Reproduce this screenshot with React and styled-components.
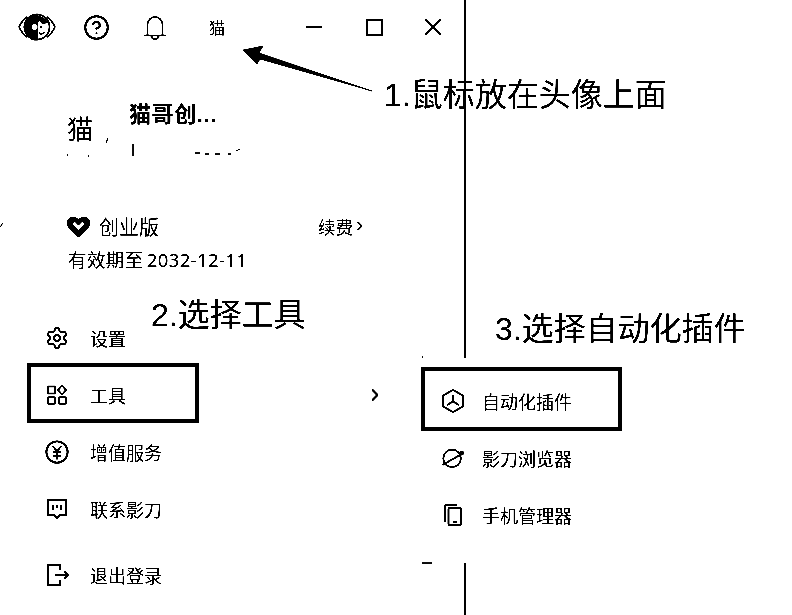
import React from 'react'
import styled, { createGlobalStyle } from 'styled-components'
import { ChevronRight, HelpCircle, Minus, X, Settings } from 'lucide-react'

const GlobalStyle = createGlobalStyle`
  html, body {
    margin: 0;
    padding: 0;
    background: #fff;
  }
  body {
    font-family: "Liberation Sans", "Noto Sans CJK SC", sans-serif;
    color: #000;
  }
`

const Page = styled.div`
  position: relative;
  width: 792px;
  height: 615px;
  overflow: hidden;
  background: #fff;
  filter: grayscale(1) brightness(0.85) contrast(6);
`

const Panel = styled.div`
  width: 466px;
  height: 615px;
  box-sizing: border-box;
  border-right: 2px solid #000;
  display: flex;
  flex-direction: column;
`

const TitleBar = styled.div`
  height: 54px;
  display: flex;
  align-items: center;
`

const TitleSlot = styled.div`
  width: ${(props) => props.$w}px;
  flex: none;
  display: flex;
  justify-content: center;
  align-items: center;
  font-size: ${(props) => props.$size || 16}px;
`

const MaxBox = styled.span`
  width: 17px;
  height: 17px;
  box-sizing: border-box;
  border: 2px solid #000;
`

const Profile = styled.div`
  height: 100px;
  display: flex;
  padding-left: 67px;
  gap: 36px;
`

const Avatar = styled.div`
  font-size: 26px;
  line-height: 30px;
  margin-top: 61px;
`

const Name = styled.div`
  font-size: 22px;
  line-height: 24px;
  font-weight: 700;
  letter-spacing: 0.6px;
  margin-top: 49px;
`

const Plan = styled.div`
  margin-top: 56px;
  padding-left: 67px;
  padding-right: 97px;
`

const PlanRow = styled.div`
  height: 32px;
  display: flex;
  align-items: center;
  font-size: 20px;
`

const PlanName = styled.span`
  margin-left: 9px;
  flex: 1;
`

const Renew = styled.span`
  display: flex;
  align-items: center;
  font-size: 17.5px;
`

const Expire = styled.div`
  font-family: "Noto Sans", "Noto Sans CJK SC", sans-serif;
  font-size: 18.5px;
  line-height: 28px;
  letter-spacing: 0.4px;
  word-spacing: -2px;
  margin-top: 4px;
  padding-left: 1px;
`

const Menu = styled.div`
  margin-top: 35px;
  display: flex;
  flex-direction: column;
`

const Row = styled.div`
  height: 57px;
  display: flex;
  align-items: center;
  font-size: 18px;
  padding-left: ${(props) => props.$indent}px;
  margin-top: ${(props) => props.$gap || 0}px;
`

const IconSlot = styled.span`
  width: 24px;
  margin-right: ${(props) => props.$space}px;
  flex: none;
  display: flex;
  justify-content: center;
  align-items: center;
`

const RowLabel = styled.span`
  flex: 1;
`

const RowArrow = styled.span`
  display: flex;
  margin-right: 79px;
`

const Submenu = styled.div`
  position: absolute;
  left: 420px;
  top: 358px;
  width: 204px;
  height: 205px;
  background: #fff;
  display: flex;
  flex-direction: column;
  padding-top: 14px;
  box-sizing: border-box;
`

const Mark = styled.div`
  position: absolute;
  box-sizing: border-box;
  border: 4px solid #000;
  left: ${(props) => props.$x}px;
  top: ${(props) => props.$y}px;
  width: ${(props) => props.$w}px;
  height: ${(props) => props.$h}px;
`

const Note = styled.div`
  position: absolute;
  left: ${(props) => props.$x}px;
  top: ${(props) => props.$y}px;
  font-size: 32px;
  line-height: 40px;
  white-space: nowrap;
`

const Overlay = styled.svg`
  position: absolute;
  left: 0;
  top: 0;
  pointer-events: none;
`

const Logo = () => (
  <svg width="38" height="28" viewBox="0 0 38 28" fill="none" stroke="#000" strokeWidth="1.6">
    <path d="M1 14C4 8 7 5 9 4M1 14c3 6 6 9 8 10M37 14c-3-6-6-9-8-10M37 14c-3 6-6 9-8 10" />
    <circle cx="19" cy="14" r="12.5" />
    <path d="M19 1.500a12.500 12.500 0 0 0 0 25z" fill="#000" />
    <circle cx="16.500" cy="14" r="3" fill="#fff" stroke="none" />
    <path d="M20 3c4 0 8 3 10 7l-6 1-2-3-2 1z" fill="#000" stroke="none" />
    <circle cx="23" cy="14" r="1.200" fill="#000" stroke="none" />
    <path d="M21 20c2 1.500 4 1 6-1" />
  </svg>
)

const BellIcon = () => (
  <svg width="24" height="25" viewBox="0 0 24 25" fill="none" stroke="#000" strokeWidth="1.500">
    <path d="M4.500 20V9.500a7.500 7.500 0 0 1 15 0V20" />
    <path d="M1 20.500h22" />
    <path d="M8.500 21a3.500 3 0 0 0 7 0" />
  </svg>
)

const HeartBadge = () => (
  <svg width="23" height="23" viewBox="0 0 24 24">
    <path
      fill="#000"
      fillRule="evenodd"
      d="M12 23.500L1.500 13C-1 9.500-.5 5 2.500 3c3-1.800 6.500-1.500 9.500 1.500C15 1.500 18.500 1.200 21.500 3c3 2 3.500 6.500 1 10zM5.500 9l6.500 7 6.500-7-2.400-2.200L12 11 7.900 6.800z"
    />
  </svg>
)

const ToolsIcon = () => (
  <svg width="22" height="22" viewBox="0 0 22 22" fill="none" stroke="#000" strokeWidth="1.700">
    <rect x="2" y="2.500" width="7" height="7" />
    <path d="M16 1.500l4 4.500-4 4.500-4-4.500z" />
    <rect x="2" y="13" width="7" height="7" rx="1.500" />
    <rect x="13" y="13" width="7" height="7" rx="1.500" />
  </svg>
)

const YuanIcon = () => (
  <svg width="26" height="26" viewBox="0 0 26 26" fill="none" stroke="#000" strokeWidth="2">
    <circle cx="13" cy="13" r="11.500" />
    <path d="M8.500 6.500L13 12.500l4.500-6M8.500 13h9M8.500 17h9M13 12.500V21" strokeWidth="1.800" />
  </svg>
)

const ChatIcon = () => (
  <svg width="22" height="22" viewBox="0 0 22 22" fill="none" stroke="#000" strokeWidth="2">
    <path d="M2 2h18v15h-6l-3 3-3-3H2z" />
    <path d="M7 7v5M11 7v3M15 7v5" />
  </svg>
)

const ExitIcon = () => (
  <svg width="24" height="24" viewBox="0 0 24 24" fill="none" stroke="#000" strokeWidth="2">
    <path d="M15 7V2H3v20h12v-5" />
    <path d="M10 12h13M19.500 8.500L23 12l-3.500 3.500" strokeWidth="1.500" />
  </svg>
)

const HexIcon = () => (
  <svg width="24" height="26" viewBox="0 0 24 26" fill="none" stroke="#000" strokeWidth="1.800">
    <path d="M12 2l10 5.500v11L12 24 2 18.500v-11z" />
    <path d="M12 7v6.500M12 13.500l-6 3.500M12 13.500l6 3.500" />
  </svg>
)

const PlanetIcon = () => (
  <svg width="26" height="24" viewBox="0 0 26 24" fill="none" stroke="#000" strokeWidth="1.800">
    <circle cx="12" cy="12.500" r="9.500" />
    <path d="M1.500 19.500L22 8" />
    <circle cx="22.500" cy="6.500" r="1.500" />
  </svg>
)

const PhoneIcon = () => (
  <svg width="20" height="22" viewBox="0 0 20 22" fill="none" stroke="#000" strokeWidth="1.800">
    <path d="M2 18V3c0-1 .5-2 2-2h10" />
    <rect x="5.500" y="4" width="12.500" height="17" rx="1" />
    <path d="M10 18h4" strokeWidth="2" />
  </svg>
)

const rows = [
  { icon: <Settings size={24} strokeWidth={1.8} />, label: '设置' },
  { icon: <ToolsIcon />, label: '工具', arrow: true },
  { icon: <YuanIcon />, label: '增值服务' },
  { icon: <ChatIcon />, label: '联系影刀' },
  { icon: <ExitIcon />, label: '退出登录', gap: 9 }
]

const subRows = [
  { icon: <HexIcon />, label: '自动化插件' },
  { icon: <PlanetIcon />, label: '影刀浏览器' },
  { icon: <PhoneIcon />, label: '手机管理器' }
]

export default function App() {
  return (
    <Page>
      <GlobalStyle />
      <Panel>
        <TitleBar>
          <TitleSlot $w={73}><Logo /></TitleSlot>
          <TitleSlot $w={46}><HelpCircle size={27} strokeWidth={1.8} /></TitleSlot>
          <TitleSlot $w={72}><BellIcon /></TitleSlot>
          <TitleSlot $w={52} $size={16}>猫</TitleSlot>
          <TitleSlot $w={41} />
          <TitleSlot $w={60}><Minus size={24} strokeWidth={2} /></TitleSlot>
          <TitleSlot $w={60}><MaxBox /></TitleSlot>
          <TitleSlot $w={58}><X size={28} strokeWidth={1.6} /></TitleSlot>
        </TitleBar>
        <Profile>
          <Avatar>猫</Avatar>
          <Name>猫哥创...</Name>
        </Profile>
        <Plan>
          <PlanRow>
            <HeartBadge />
            <PlanName>创业版</PlanName>
            <Renew>续费<ChevronRight size={14} strokeWidth={3} /></Renew>
          </PlanRow>
          <Expire>有效期至 2032-12-11</Expire>
        </Plan>
        <Menu>
          {rows.map((row) => (
            <Row key={row.label} $indent={45} $gap={row.gap}>
              <IconSlot $space={21}>{row.icon}</IconSlot>
              <RowLabel>{row.label}</RowLabel>
              {row.arrow && (
                <RowArrow><ChevronRight size={20} strokeWidth={2.4} /></RowArrow>
              )}
            </Row>
          ))}
        </Menu>
      </Panel>
      <Submenu>
        {subRows.map((row) => (
          <Row key={row.label} $indent={21}>
            <IconSlot $space={17}>{row.icon}</IconSlot>
            <RowLabel>{row.label}</RowLabel>
          </Row>
        ))}
      </Submenu>
      <Mark $x={27} $y={363} $w={172} $h={60} />
      <Mark $x={421} $y={367} $w={201} $h={64} />
      <Overlay width="792" height="615" viewBox="0 0 792 615">
        <path d="M243 50L263 46 259 53 372 91 260 59 257 64z" fill="#000" stroke="#000" strokeWidth="0.6" />
        <path
          d="M133 144v12M195 153h5M205 154h4M215 154h5M228 154h3M236 151l4-2M108 138l-2 5M67 155h1M88 156h1M0 227l3-4M422 357h1M422 563h10"
          stroke="#000"
          strokeWidth="1"
          fill="none"
        />
      </Overlay>
      <Note $x={384} $y={75}>1.鼠标放在头像上面</Note>
      <Note $x={151} $y={295}>2.选择工具</Note>
      <Note $x={495} $y={309}>3.选择自动化插件</Note>
    </Page>
  )
}
